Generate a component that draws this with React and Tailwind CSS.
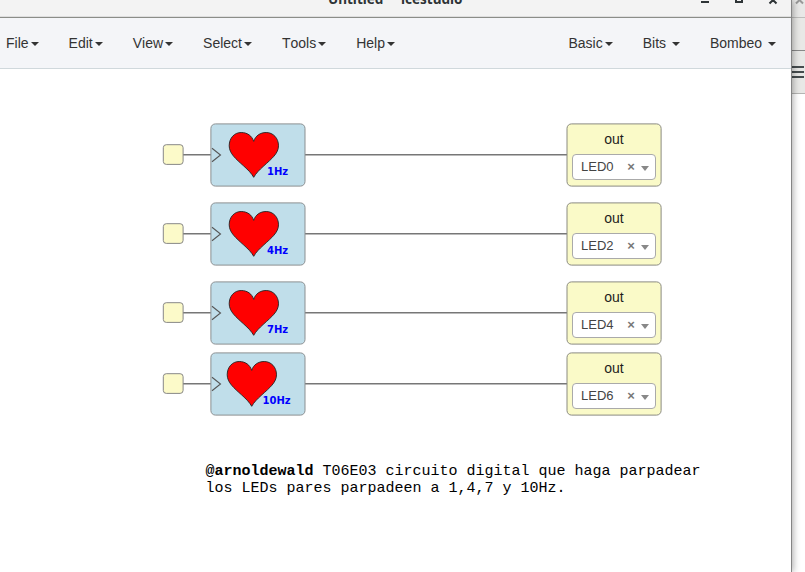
const leftMenus = ['File', 'Edit', 'View', 'Select', 'Tools', 'Help'];
const rightMenus = ['Basic', 'Bits ', 'Bombeo '];

const rows = [
  { rate: '1Hz', led: 'LED0', place: 'top-[123px]', heart: 'left-[17px]', label: 'left-[56px]' },
  { rate: '4Hz', led: 'LED2', place: 'top-[202px]', heart: 'left-[17px]', label: 'left-[56px]' },
  { rate: '7Hz', led: 'LED4', place: 'top-[281px]', heart: 'left-[17px]', label: 'left-[56px]' },
  { rate: '10Hz', led: 'LED6', place: 'top-[352px]', heart: 'left-[15px]', label: 'left-[51.5px]' },
];

function Menu({ label }) {
  return (
    <button className="flex h-full items-center whitespace-pre px-[15px] text-sm text-[#333] [font-kerning:none]">
      {label}
      <svg className="ml-0.5 mt-px h-1 w-2" viewBox="0 0 8 4">
        <path d="M0 0H8L4 4Z" fill="#333" />
      </svg>
    </button>
  );
}

function TitleBar() {
  return (
    <header className="relative h-[18px] shrink-0 overflow-hidden border-b border-[#8b8d88] bg-[#f3f3f3] shadow-[inset_0_-1px_0_#dedede]">
      <div className="absolute left-[328px] top-[-11px] font-['Noto_Sans','Open_Sans',sans-serif] text-[13.5px] font-bold leading-5 text-[#2e3436]">
        Untitled
      </div>
      <div className="absolute left-[401px] top-[-11px] font-['Noto_Sans','Open_Sans',sans-serif] text-[13.5px] font-bold leading-5 text-[#2e3436]">
        icestudio
      </div>
      <svg className="absolute left-[700px] top-0 h-4 w-[80px]" viewBox="0 0 80 16" fill="none" stroke="#2e3436" strokeWidth="2">
        <path d="M1 2H9M36 -5V2H42V-5M69.500 3.500L73 0L76.500 3.500" />
      </svg>
    </header>
  );
}

function Row({ rate, led, place, heart, label }) {
  return (
    <div className={`absolute left-[162px] h-16 w-[500px] ${place}`}>
      <svg className="absolute inset-0 h-16 w-[500px]" viewBox="0 0 500 64" fill="none">
        <path d="M21 31.800H49M143 31.800H405" stroke="#777" strokeWidth="1.500" />
        <rect x="1.300" y="21.700" width="19.800" height="19.700" rx="3" fill="#fcfac9" stroke="#888" />
        <rect x="48.900" y="0.900" width="94.100" height="62.200" rx="4.500" fill="#c0deea" stroke="#8b8f91" />
        <rect x="405" y="0.900" width="94.100" height="62.200" rx="4.500" fill="#fafac8" stroke="#8a8a80" />
        <path d="M50 25.200L58.500 32L50 38.800" stroke="#555" strokeWidth="1.100" />
      </svg>
      <div className="absolute left-[49px] top-0 h-16 w-[94px]">
        <svg className={`absolute top-[8px] h-[48px] w-[52px] ${heart}`} viewBox="0 0 52 48">
          <path
            d="M25.700 46.300C23.500 42.400 20.500 39.300 15.500 34.800C8 28 1.200 22.500 1.200 14.800C1.200 7.100 6.300 1.500 13.200 1.500C19.200 1.500 24 4.800 25.700 10.400C27.400 4.800 32.200 1.500 38.200 1.500C45.100 1.500 50.500 7.100 50.500 14.800C50.500 22.500 43.400 28 35.900 34.800C30.900 39.300 27.900 42.400 25.700 46.300Z"
            fill="#f00"
            stroke="#222"
            strokeWidth="0.900"
          />
        </svg>
        <span className={`absolute top-[42px] font-['DejaVu_Sans',sans-serif] text-[10px] font-bold leading-[14px] text-[#00f] ${label}`}>
          {rate}
        </span>
      </div>
      <div className="absolute left-[405px] top-0 flex h-16 w-[94px] flex-col items-center pt-[6px]">
        <span className="text-sm leading-5 text-[#1d1d1d]">out</span>
        <div className="mt-[5px] flex h-[26px] w-[84px] shrink-0 items-center rounded-[4px] border border-[#aaa] bg-white pl-2 text-[13px] leading-6 text-[#444]">
          <span className="w-[45px]">{led}</span>
          <span className="w-[10px] text-center text-[13px] font-bold text-[#777]">×</span>
          <svg className="ml-[5px] mt-[3px] h-[5px] w-2" viewBox="0 0 8 5">
            <path d="M0 0H8L4 5Z" fill="#888" />
          </svg>
        </div>
      </div>
    </div>
  );
}

export default function App() {
  return (
    <div className="flex h-[572px] w-[805px] overflow-hidden bg-white font-['Liberation_Sans',Arial,sans-serif]">
      <div className="relative z-10 flex w-[792px] shrink-0 flex-col border-r border-[#858585] bg-white shadow-[1px_0_7px_rgba(0,0,0,0.35)]">
        <TitleBar />
        <nav className="flex h-[51px] shrink-0 justify-between border-b border-[#d0d8dc] bg-[#f4f5f8]">
          <div className="-ml-[9px] flex">
            {leftMenus.map((label) => <Menu key={label} label={label} />)}
          </div>
          <div className="flex">
            {rightMenus.map((label) => <Menu key={label} label={label} />)}
          </div>
        </nav>
        {rows.map((row) => <Row key={row.led} {...row} />)}
        <div className="absolute left-[205.5px] top-[463px] whitespace-pre font-['Liberation_Mono',monospace] text-[15px] leading-[17px] text-black">
          <div className="flex">
            <b>@arnoldewald</b>
            <span>{' T06E03 circuito digital que haga parpadear'}</span>
          </div>
          <div>los LEDs pares parpadeen a 1,4,7 y 10Hz.</div>
        </div>
      </div>
      <aside className="flex w-[13px] flex-col bg-white">
        <div className="h-[18px] border-b border-[#bdbdbb] bg-[#e8e8e7]">
          <svg className="ml-[2px] h-4 w-[11px]" viewBox="0 0 11 16" fill="none">
            <path d="M2 3.500L5.500 0L9 3.500" stroke="#999" strokeWidth="2" />
          </svg>
        </div>
        <div className="h-[33px] border-b border-[#888] bg-[#e8e8e6]" />
        <div className="h-[43px] border-b border-[#b5b5b3] bg-[#e8e8e6]">
          <svg className="h-[42px] w-[13px]" viewBox="0 0 13 42" stroke="#464c4e" strokeWidth="2">
            <path d="M0 16H12M0 21H12M0 26H12" />
          </svg>
        </div>
      </aside>
    </div>
  );
}
